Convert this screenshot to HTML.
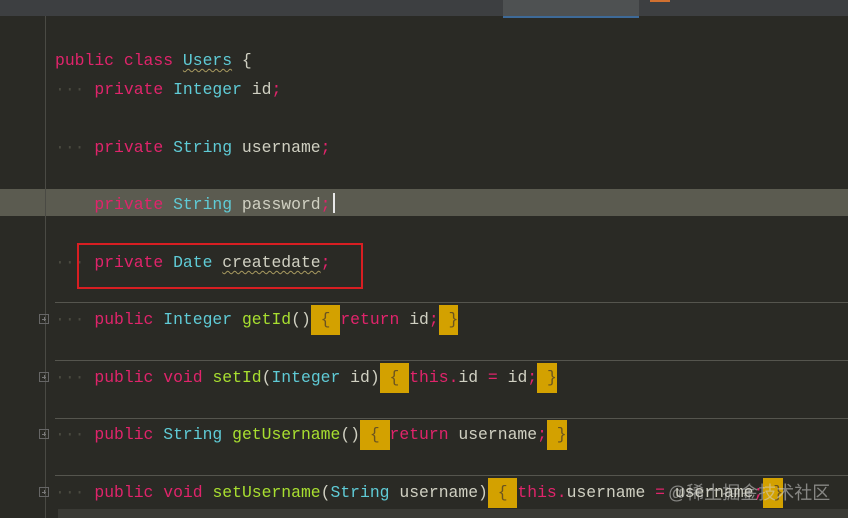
<!DOCTYPE html>
<html><head><meta charset="utf-8"><style>
html,body{margin:0;padding:0;}
body{width:848px;height:518px;overflow:hidden;background:#2a2a25;position:relative;font-family:"Liberation Mono",monospace;}
.top{position:absolute;left:0;top:0;width:848px;height:16px;background:#3d3f41;}
.tab{position:absolute;left:503px;top:0;width:136px;height:16px;background:#4e5152;border-bottom:2px solid #3e6a98;}
.org{position:absolute;left:650px;top:0;width:20px;height:2px;background:#d07030;}
.gut{position:absolute;left:45px;top:16px;width:1px;height:502px;background:#4a4a44;}
.hl{position:absolute;left:0;top:189px;width:848px;height:27px;background:#5b5b50;}
.l{position:absolute;left:55px;height:29px;line-height:29px;font-size:16.4px;white-space:pre;color:#d0d0c2;}
.k{color:#e0246b}.t{color:#5fcbd6}.m{color:#a8df30}.p{color:#e0246b}
.b{background:#d3a100;color:#6a5320;display:inline-block;height:30px;line-height:30px;}
.d{color:#4a4a40}
.wv{text-decoration:underline wavy #a89a60;text-decoration-thickness:1px;text-underline-offset:3px;}
.sep{position:absolute;left:55px;width:793px;height:1px;background:#55554e;}
.red{position:absolute;left:77px;top:243px;width:282px;height:42px;border:2px solid #d81e22;}
.fold{position:absolute;left:39px;width:10px;height:10px;border:1px solid #666;box-sizing:border-box;}
.fold:before{content:"";position:absolute;left:2px;top:4px;width:4px;height:1px;background:#777;}
.fold:after{content:"";position:absolute;left:4px;top:2px;width:1px;height:4px;background:#777;}
.caret{position:absolute;left:333px;top:193px;width:2px;height:20px;background:#e8e8e8;}
.sb{position:absolute;left:58px;top:509px;width:790px;height:9px;background:#3a3a35;}
.wm{position:absolute;left:668px;top:479px;font-family:"Liberation Sans","Noto Sans CJK SC",sans-serif;font-size:18px;color:rgba(210,210,210,0.55);white-space:nowrap;}
</style></head><body>
<div class="top"></div><div class="tab"></div><div class="org"></div>
<div class="hl"></div>
<div class="gut"></div>
<div class="l" style="top:46px"><span class="k">public</span> <span class="k">class</span> <span class="t wv">Users</span> {</div>
<div class="l" style="top:75px"><span class="d">···</span> <span class="k">private</span> <span class="t">Integer</span> id<span class="p">;</span></div>
<div class="l" style="top:133px"><span class="d">···</span> <span class="k">private</span> <span class="t">String</span> username<span class="p">;</span></div>
<div class="l" style="top:190px">    <span class="k">private</span> <span class="t">String</span> password<span class="p">;</span></div>
<div class="caret"></div>
<div class="l" style="top:248px"><span class="d">···</span> <span class="k">private</span> <span class="t">Date</span> <span class="wv">createdate</span><span class="p">;</span></div>
<div class="red"></div>
<div class="sep" style="top:302px"></div>
<div class="sep" style="top:360px"></div>
<div class="sep" style="top:418px"></div>
<div class="sep" style="top:475px"></div>
<div class="fold" style="top:314px"></div>
<div class="fold" style="top:372px"></div>
<div class="fold" style="top:429px"></div>
<div class="fold" style="top:487px"></div>
<div class="l" style="top:305px"><span class="d">···</span> <span class="k">public</span> <span class="t">Integer</span> <span class="m">getId</span>()<span class="b"> { </span><span class="k">return</span> id<span class="p">;</span><span class="b"> }</span></div>
<div class="l" style="top:363px"><span class="d">···</span> <span class="k">public</span> <span class="k">void</span> <span class="m">setId</span>(<span class="t">Integer</span> id)<span class="b"> { </span><span class="k">this</span><span class="p">.</span>id <span class="p">=</span> id<span class="p">;</span><span class="b"> }</span></div>
<div class="l" style="top:420px"><span class="d">···</span> <span class="k">public</span> <span class="t">String</span> <span class="m">getUsername</span>()<span class="b"> { </span><span class="k">return</span> username<span class="p">;</span><span class="b"> }</span></div>
<div class="l" style="top:478px"><span class="d">···</span> <span class="k">public</span> <span class="k">void</span> <span class="m">setUsername</span>(<span class="t">String</span> username)<span class="b"> { </span><span class="k">this</span><span class="p">.</span>username <span class="p">=</span> username<span class="p">;</span><span class="b"> }</span></div>
<div class="sb"></div>
<div class="wm">@稀土掘金技术社区</div>
</body></html>
